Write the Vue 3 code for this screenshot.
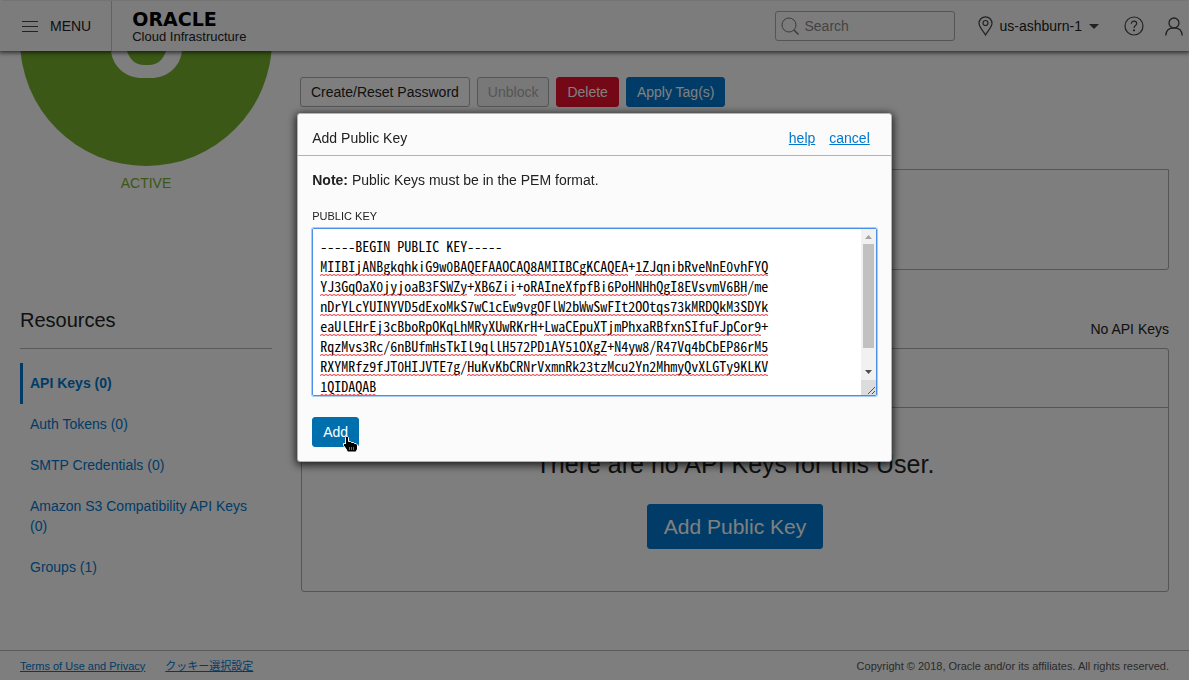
<script setup>
import { ref, computed } from 'vue'

const publicKey = ref(`-----BEGIN PUBLIC KEY-----
MIIBIjANBgkqhkiG9w0BAQEFAAOCAQ8AMIIBCgKCAQEA+1ZJqnibRveNnE0vhFYQ
YJ3GqOaX0jyjoaB3FSWZy+XB6Zii+oRAIneXfpfBi6PoHNHhQgI8EVsvmV6BH/me
nDrYLcYUINYVD5dExoMkS7wC1cEw9vgOFlW2bWwSwFIt2OOtqs73kMRDQkM3SDYk
eaUlEHrEj3cBboRpOKqLhMRyXUwRKrH+LwaCEpuXTjmPhxaRBfxnSIfuFJpCor9+
RqzMvs3Rc/6nBUfmHsTkIl9qllH572PD1AY51OXgZ+N4yw8/R47Vq4bCbEP86rM5
RXYMRfz9fJT0HIJVTE7g/HuKvKbCRNrVxmnRk23tzMcu2Yn2MhmyQvXLGTy9KLKV
1QIDAQAB
-----END PUBLIC KEY-----`)

const CHAR = 7
const LINE = 20

// Spell-check squiggles: one run per unknown word of the key body.
const squiggles = computed(() =>
  publicKey.value.split('\n').flatMap((line, row) =>
    line.startsWith('-')
      ? []
      : [...line.matchAll(/[^+/]+/g)]
          .filter((m) => m[0].length > 2)
          .map((m) => ({ x: m.index * CHAR, y: row * LINE + 18, w: m[0].length * CHAR }))
  )
)

const resources = [
  { label: 'API Keys (0)', active: true },
  { label: 'Auth Tokens (0)' },
  { label: 'SMTP Credentials (0)' },
  { label: 'Amazon S3 Compatibility API Keys (0)' },
  { label: 'Groups (1)' }
]
</script>

<template>
  <div class="app">
    <header class="topbar">
      <button class="menu" type="button">
        <svg width="16" height="11" viewBox="0 0 16 11" aria-hidden="true">
          <path d="M0 .5h16M0 5.5h16M0 10.5h16" stroke="#444" />
        </svg>
        <span>MENU</span>
      </button>
      <div class="brand">
        <span class="wordmark">ORACLE</span>
        <span class="product">Cloud Infrastructure</span>
      </div>
      <label class="search">
        <svg width="18" height="18" viewBox="0 0 18 18" fill="none" stroke="#777" aria-hidden="true">
          <circle cx="8" cy="8" r="7" />
          <path d="M13 13l4.500 4.500" stroke-width="1.500" />
        </svg>
        <input type="search" placeholder="Search" aria-label="Search" />
      </label>
      <button class="region" type="button">
        <svg width="15" height="20" viewBox="0 0 15 20" fill="none" stroke="#444" stroke-width="1.200" aria-hidden="true">
          <path d="M7.500 19C5 14.500 1 11 1 7.300a6.500 6.500 0 0 1 13 0C14 11 10 14.500 7.500 19z" />
          <circle cx="7.500" cy="7" r="2.500" />
        </svg>
        <span>us-ashburn-1</span>
        <svg class="caret" width="10" height="5" viewBox="0 0 10 5" aria-hidden="true">
          <path d="M0 0h10L5 5z" fill="#444" />
        </svg>
      </button>
      <button class="icon" type="button" aria-label="Help">
        <svg width="20" height="20" viewBox="0 0 20 20" fill="none" stroke="#444" stroke-width="1.200" aria-hidden="true">
          <circle cx="10" cy="10" r="9" />
          <path d="M7.300 7.800c0-1.600 1.100-2.600 2.700-2.600s2.700 1 2.700 2.400c0 2-2.700 2-2.700 4.400" />
          <circle cx="10" cy="14.300" r=".5" fill="#444" />
        </svg>
      </button>
      <button class="icon user" type="button" aria-label="Profile">
        <svg width="18" height="19" viewBox="0 0 18 19" fill="none" stroke="#444" stroke-width="1.300" aria-hidden="true">
          <circle cx="9" cy="6" r="5" />
          <path d="M.7 18.500C1 13.500 4 10.800 9 10.800s8 2.700 8.300 7.700" />
        </svg>
      </button>
    </header>

    <div class="body">
      <aside class="side">
        <svg class="badge" viewBox="0 0 252 115" aria-hidden="true">
          <circle cx="126" cy="-11" r="126" fill="#76b02e" />
          <path d="M91 0C93 17 107 27 122 27H131C146 27 160 17 162 0z" fill="#fcfcfc" />
          <path d="M107 0C110 9 116 14 124 14H129C137 14 143 9 146 0z" fill="#76b02e" />
        </svg>
        <p class="status">ACTIVE</p>
        <h2>Resources</h2>
        <nav>
          <a v-for="r in resources" :key="r.label" href="#" :class="{ active: r.active }">{{ r.label }}</a>
        </nav>
      </aside>

      <main class="main">
        <div class="actions">
          <button class="btn" type="button">Create/Reset Password</button>
          <button class="btn" type="button" disabled>Unblock</button>
          <button class="btn danger" type="button">Delete</button>
          <button class="btn primary" type="button">Apply Tag(s)</button>
        </div>
        <section class="info"></section>
        <p class="count">No API Keys</p>
        <section class="keys">
          <div class="keys-head"></div>
          <div class="empty">
            <p>There are no API Keys for this User.</p>
            <button class="btn primary large" type="button">Add Public Key</button>
          </div>
        </section>
      </main>
    </div>

    <footer class="foot">
      <a href="#">Terms of Use and Privacy</a>
      <a href="#" lang="ja">クッキー選択設定</a>
      <span>Copyright © 2018, Oracle and/or its affiliates. All rights reserved.</span>
    </footer>

    <div class="overlay">
      <form class="dialog" role="dialog" aria-labelledby="dialog-title" @submit.prevent>
        <div class="dialog-head">
          <h1 id="dialog-title">Add Public Key</h1>
          <a href="#">help</a>
          <a href="#">cancel</a>
        </div>
        <div class="dialog-body">
          <p><strong>Note:</strong> Public Keys must be in the PEM format.</p>
          <label for="public-key">PUBLIC KEY</label>
          <div class="editor">
            <textarea id="public-key" v-model="publicKey" spellcheck="false"></textarea>
            <svg class="squiggles" aria-hidden="true">
              <defs>
                <pattern id="wave" width="4" height="2" patternUnits="userSpaceOnUse">
                  <path d="M0 1.500l2-1L4 1.500" fill="none" stroke="#f22b35" />
                </pattern>
              </defs>
              <g v-for="s in squiggles" :key="s.y + '-' + s.x" :transform="`translate(${s.x} ${s.y})`">
                <rect :width="s.w" height="2" fill="url(#wave)" />
              </g>
            </svg>
            <svg class="scrollbar" width="15" height="166" viewBox="0 0 15 166" aria-hidden="true">
              <path d="M0 0h15v151H0z" fill="#f1f1f1" />
              <path d="M2 15h11v104H2z" fill="#c1c1c1" />
              <path d="M4 10h7L7.500 6z" fill="#a3a3a3" />
              <path d="M4 141h7l-3.500 4z" fill="#505050" />
              <path d="M0 151h15v15H0z" fill="#dcdcdc" />
              <path d="M7 165l7-7M11 165l3-3" stroke="#555" />
            </svg>
          </div>
          <div class="submit">
            <button class="btn add" type="submit">Add</button>
            <svg class="pointer" width="17" height="18" viewBox="0 0 17 18" aria-hidden="true">
              <path
                d="M3.500 2.500l1-1h1l1 1v4h2l1 1h2l1 1h1.500l1.500 1.500v4l-1.500 3h-8.500L4 14l-2.500-3.500v-2H3l.5.5z"
                fill="#000"
                stroke="#fff"
              />
              <path d="M7.500 12v3M9.500 12v3M11.500 12v3" stroke="#999" stroke-width=".7" />
            </svg>
          </div>
        </div>
      </form>
    </div>
  </div>
</template>

<style>
body {
  margin: 0;
  background: #fcfcfc;
}
</style>

<style scoped>
.app {
  display: flex;
  flex-direction: column;
  box-sizing: border-box;
  min-height: 100vh;
  border-top: 1px solid #9a9a9a;
  background: #fcfcfc;
  color: #222;
  font: 14px/20px "Liberation Sans", Arial, "Noto Sans CJK JP", sans-serif;
}
* {
  box-sizing: border-box;
}
p,
h1,
h2 {
  margin: 0;
  font-size: 14px;
  font-weight: 400;
}
a {
  color: #0078ce;
}
button,
input {
  font: inherit;
  color: inherit;
}

.topbar {
  position: relative;
  display: flex;
  align-items: center;
  height: 50px;
  padding-right: 6px;
  background: #f8f8f8;
  box-shadow: 0 1px 4px 1px rgba(0, 0, 0, 0.6);
}
.menu,
.region,
.icon {
  display: flex;
  align-items: center;
  padding: 0;
  border: 0;
  background: none;
}
.menu {
  align-self: stretch;
  gap: 12px;
  padding: 0 20px 0 22px;
  border-right: 1px solid #c4c4c4;
}
.brand {
  display: flex;
  flex-direction: column;
  flex: 1;
  padding: 3px 0 0 20px;
}
.wordmark {
  color: #000;
  font: bold 19px/17px "DejaVu Sans", sans-serif;
}
.product {
  font-size: 13px;
  line-height: 17px;
}
.search {
  display: flex;
  align-items: center;
  gap: 6px;
  width: 180px;
  height: 30px;
  padding: 0 5px;
  border: 1px solid #aaa;
  border-radius: 3px;
}
.search input {
  flex: 1;
  min-width: 0;
  padding: 0;
  border: 0;
  outline: 0;
  background: none;
}
.search input::placeholder {
  color: #888;
}
.region {
  gap: 7px;
  margin: 0 25px 0 23px;
}
.icon {
  margin-right: 21px;
}
.icon.user {
  margin-right: 0;
}

.body {
  display: grid;
  grid-template-columns: 252px 1fr;
  gap: 28px;
  padding: 0 20px;
}
.badge {
  display: block;
  width: 100%;
}
.status {
  margin-top: 7px;
  color: #76b02e;
  text-align: center;
}
h2 {
  margin-top: 111px;
  padding: 4px 0 16px;
  border-bottom: 1px solid #b4b4b4;
  font-size: 20px;
  line-height: 24px;
}
nav {
  display: flex;
  flex-direction: column;
  margin-top: 14px;
}
nav a {
  padding: 10px 20px 11px 7px;
  border-left: 3px solid transparent;
  text-decoration: none;
}
nav a.active {
  border-color: #0078ce;
  font-weight: 700;
}

.actions {
  display: flex;
  gap: 7px;
  margin-top: 26px;
}
.btn {
  height: 30px;
  padding: 0 10px;
  border: 1px solid #aaa;
  border-radius: 3px;
  background: none;
}
.btn:disabled {
  background: #f0f0f0;
  color: #aaa;
}
.btn.danger {
  border-color: #e8102d;
  background: #e8102d;
  color: #fff;
}
.btn.primary {
  border-color: #0078ce;
  background: #0078ce;
  color: #fff;
}
.btn.large {
  height: 45px;
  padding: 0 16px;
  font-size: 21px;
}
.info {
  height: 101px;
  margin: 62px 0 0 1px;
  border: 1px solid #aaa;
  border-radius: 0 0 3px 3px;
}
.count {
  margin: 49px 0 9px;
  text-align: right;
}
.keys {
  margin-left: 1px;
  border: 1px solid #aaa;
  border-radius: 3px;
}
.keys-head {
  height: 59px;
  border-bottom: 1px solid #aaa;
}
.empty {
  display: flex;
  flex-direction: column;
  align-items: center;
  gap: 24px;
  padding: 40px 0 42px;
}
.empty p {
  font-size: 25px;
  line-height: 32px;
}

.foot {
  display: flex;
  align-items: center;
  gap: 20px;
  height: 30px;
  margin-top: auto;
  padding: 0 20px;
  border-top: 1px solid #b4b4b4;
  font-size: 11px;
}
.foot span {
  margin-left: auto;
  color: #555;
}

.overlay {
  position: fixed;
  inset: 1px 0 0;
  padding-top: 112px;
  background: rgba(0, 0, 0, 0.5);
}
.dialog {
  width: 50%;
  margin: 0 auto;
  border: 1px solid #b0b4b8;
  border-radius: 3px;
  background: #fbfbfb;
  box-shadow: 0 2px 8px 1px rgba(0, 0, 0, 0.8);
}
.dialog-head {
  display: flex;
  align-items: center;
  gap: 14px;
  height: 42px;
  padding: 6px 21px 0 14px;
  border-bottom: 1px solid #b0b4b8;
}
.dialog-head h1 {
  flex: 1;
}
.dialog-body {
  padding: 14px;
}
.dialog-body label {
  display: block;
  margin: 16px 0 2px;
  font-size: 11px;
}
.editor {
  position: relative;
  height: 168px;
}
textarea {
  display: block;
  width: 100%;
  height: 100%;
  padding: 7px;
  border: 1px solid #4a90e8;
  border-radius: 2px;
  outline: 0;
  box-shadow: 0 0 0 1px #a8cdf5;
  background: #fff;
  color: #000;
  font: 14px/20px "Noto Sans Mono CJK JP", "Noto Sans CJK JP", monospace;
  overflow-y: scroll;
  resize: both;
}
.squiggles {
  position: absolute;
  top: 8px;
  left: 8px;
  width: calc(100% - 24px);
  height: calc(100% - 9px);
  overflow: hidden;
  pointer-events: none;
}
.scrollbar {
  position: absolute;
  top: 1px;
  right: 1px;
  pointer-events: none;
}
.submit {
  position: relative;
  margin-top: 21px;
  width: max-content;
}
.btn.add {
  display: block;
  border-color: #006fae;
  background: #006fae;
  color: #fff;
}
.pointer {
  position: absolute;
  top: 18px;
  left: 30px;
}
</style>
